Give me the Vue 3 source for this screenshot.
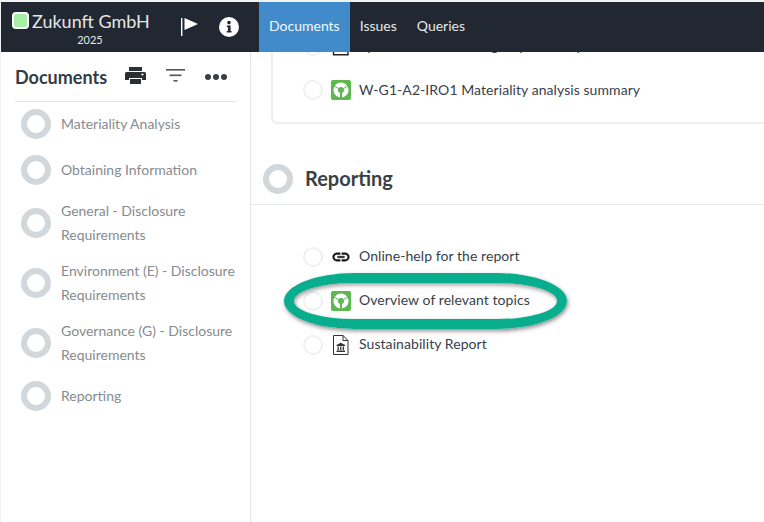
<template>
  <div class="page">
    <header class="topbar">
      <div class="brand">
        <div class="company">
          <span class="swatch"></span>
          <span class="company-name">Zukunft GmbH</span>
        </div>
        <div class="year">2025</div>
      </div>
      <svg class="flag" width="20" height="20" viewBox="0 0 20 20">
        <rect x="1" y="1" width="1.4" height="18" fill="#fff" />
        <path d="M4.5 1 L18 7 L4.5 13 Z" fill="#fff" />
      </svg>
      <svg class="info" width="20" height="20" viewBox="0 0 20 20">
        <circle cx="10" cy="10" r="10" fill="#fff" />
        <circle cx="10" cy="5.6" r="1.8" fill="#212831" />
        <path d="M7.8 8.4 H11.6 V14 H12.6 V15.6 H7.8 V14 H8.9 V10 H7.8 Z" fill="#212831" />
      </svg>
      <nav class="tabs">
        <a v-for="tab in tabs" :key="tab" class="tab" :class="{ active: tab === 'Documents' }">{{ tab }}</a>
      </nav>
    </header>

    <div class="body">
      <aside class="sidebar">
        <div class="side-head">
          <h2>Documents</h2>
          <svg class="print" width="21" height="17" viewBox="0 0 21 17">
            <path d="M4 0 H17 V4 H4 Z M1.5 5 H19.5 Q21 5 21 6.5 V13 H17 V11 H4 V13 H0 V6.5 Q0 5 1.5 5 Z M5 12 H16 V17 H5 Z" fill="#2b2f33" />
            <circle cx="17.5" cy="7.5" r="1.1" fill="#fff" />
          </svg>
          <svg class="filter" width="19" height="13" viewBox="0 0 19 13">
            <rect x="0" y="0" width="19" height="1.6" fill="#555" />
            <rect x="3.5" y="5.5" width="12" height="1.6" fill="#555" />
            <rect x="7.5" y="11" width="4" height="1.6" fill="#555" />
          </svg>
          <svg class="dots" width="22" height="6" viewBox="0 0 22 6">
            <circle cx="3" cy="3" r="3" fill="#3c4043" />
            <circle cx="11" cy="3" r="3" fill="#3c4043" />
            <circle cx="19" cy="3" r="3" fill="#3c4043" />
          </svg>
        </div>
        <ul class="side-list">
          <li v-for="item in sections" :key="item" class="side-item">
            <span class="ring"></span>
            <span class="side-label">{{ item }}</span>
          </li>
        </ul>
      </aside>

      <main class="content">
        <div class="card">
          <div class="row">
            <span class="radio"></span>
            <svg class="icon" width="20" height="20" viewBox="0 0 20 20">
              <path d="M2.5 0.5 H12 L17 5.5 V18.8 H2.5 Z" fill="#fff" stroke="#222" stroke-width="1.4" />
            </svg>
            <span class="doc-label">Synthesis of relevant groups and topics</span>
          </div>
          <div class="row">
            <span class="radio"></span>
            <svg class="icon" width="20" height="20" viewBox="0 0 20 20">
              <rect width="20" height="20" rx="2" fill="#5cb84f" />
              <circle cx="10" cy="10" r="5.3" fill="none" stroke="#fff" stroke-width="4.6" />
              <path d="M10 12 L10 18.5" stroke="#5cb84f" stroke-width="2" />
              <path d="M7.5 8.5 L2.6 5.7 M12.5 8.5 L17.4 5.7" stroke="#5cb84f" stroke-width="1" />
            </svg>
            <span class="doc-label">W-G1-A2-IRO1 Materiality analysis summary</span>
          </div>
        </div>

        <div class="section-head">
          <span class="ring big"></span>
          <h3>Reporting</h3>
        </div>

        <div class="doc-list">
          <div class="row">
            <span class="radio"></span>
            <svg class="icon" width="20" height="20" viewBox="0 0 24 24">
              <path d="M3.9 12c0-1.71 1.39-3.1 3.1-3.1h4V7H7c-2.76 0-5 2.24-5 5s2.24 5 5 5h4v-1.9H7c-1.71 0-3.1-1.39-3.1-3.1zM8 13h8v-2H8v2zm9-6h-4v1.9h4c1.71 0 3.1 1.39 3.1 3.1s-1.39 3.1-3.1 3.1h-4V17h4c2.76 0 5-2.24 5-5s-2.24-5-5-5z" fill="#111" stroke="#111" stroke-width="0.5" />
            </svg>
            <span class="doc-label">Online-help for the report</span>
          </div>
          <div class="row highlighted">
            <span class="radio"></span>
            <svg class="icon" width="20" height="20" viewBox="0 0 20 20">
              <rect width="20" height="20" rx="2" fill="#5cb84f" />
              <circle cx="10" cy="10" r="5.3" fill="none" stroke="#fff" stroke-width="4.6" />
              <path d="M10 12 L10 18.5" stroke="#5cb84f" stroke-width="2" />
              <path d="M7.5 8.5 L2.6 5.7 M12.5 8.5 L17.4 5.7" stroke="#5cb84f" stroke-width="1" />
            </svg>
            <span class="doc-label">Overview of relevant topics</span>
            <span class="oval"></span>
          </div>
          <div class="row">
            <span class="radio"></span>
            <svg class="icon" width="20" height="20" viewBox="0 0 20 20">
              <path d="M2.5 0.5 H12 L17 5.5 V19.5 H2.5 Z M12 0.5 V5.5 H17" fill="#fff" stroke="#333" stroke-width="1" />
              <path d="M5.5 10 L9.8 7.8 L14 10 V11 H5.5 Z M5.5 15.5 H14 V17 H5.5 Z M6.5 11.5 H7.8 V15 H6.5 Z M9.1 11.5 H10.4 V15 H9.1 Z M11.7 11.5 H13 V15 H11.7 Z" fill="#333" />
            </svg>
            <span class="doc-label">Sustainability Report</span>
          </div>
        </div>
      </main>
    </div>
  </div>
</template>

<script setup>
const tabs = ['Documents', 'Issues', 'Queries'];

const sections = [
  'Materiality Analysis',
  'Obtaining Information',
  'General - Disclosure Requirements',
  'Environment (E) - Disclosure Requirements',
  'Governance (G) - Disclosure Requirements',
  'Reporting'
];
</script>

<style scoped>
.page {
  width: 764px;
  height: 522px;
  box-sizing: border-box;
  padding-top: 2px;
  background: #f1f2f3;
  font-family: Lato, 'Liberation Sans', sans-serif;
  overflow: hidden;
  display: flex;
  flex-direction: column;
}

.topbar {
  height: 50px;
  flex: none;
  margin-left: 1px;
  background: #212831;
  display: flex;
  align-items: center;
  position: relative;
  z-index: 2;
}

.brand {
  width: 170px;
  flex: none;
  padding-left: 11px;
  box-sizing: border-box;
  color: #e4e6e8;
}

.company {
  display: flex;
  align-items: center;
  gap: 3px;
  height: 22px;
  margin-top: 1px;
}

.swatch {
  width: 13px;
  height: 13px;
  background: #a8eea4;
  border: 2px solid #fff;
  border-radius: 4px;
}

.company-name {
  font-size: 18px;
}

.year {
  font-size: 11px;
  text-align: center;
  width: 156px;
  margin-top: 1px;
}

.flag {
  margin-left: 9px;
}

.info {
  margin-left: 19px;
}

.tabs {
  display: flex;
  margin-left: 20px;
  height: 100%;
}

.tab {
  color: #e6e8ea;
  font-size: 14px;
  line-height: 48px;
  padding: 0 10px;
}

.tab.active {
  background: #428bca;
  color: #f4f7fa;
}

.body {
  flex: 1;
  min-height: 0;
  display: flex;
  background: #fff;
  margin-left: 1px;
}

.sidebar {
  width: 250px;
  flex: none;
  box-sizing: border-box;
  border-right: 1px solid #e2e4e6;
  padding: 0 14px;
}

.side-head {
  height: 49px;
  border-bottom: 1px solid #e2e4e6;
  display: flex;
  align-items: center;
}

.side-head h2 {
  margin: 0;
  font-size: 18px;
  font-weight: 700;
  color: #333c46;
  width: 110px;
  flex: none;
}

.print {
  margin-top: -2px;
}

.filter {
  margin-left: 20px;
  margin-top: -2px;
}

.dots {
  margin-left: 20px;
}

.side-list {
  list-style: none;
  margin: 5px 0 0;
  padding: 0 0 0 6px;
}

.side-item {
  display: flex;
  align-items: center;
  gap: 10px;
  min-height: 34px;
  margin-bottom: 12px;
}

.ring {
  width: 30px;
  height: 30px;
  box-sizing: border-box;
  border: 6px solid #d2d7dc;
  border-radius: 50%;
  flex: none;
}

.side-label {
  font-size: 14px;
  line-height: 24px;
  color: #868b90;
}

.content {
  flex: 1;
  min-width: 0;
  overflow: hidden;
}

.card {
  margin: -19px 0 0 20px;
  padding: 0 0 21px 30px;
  height: 91px;
  border: 2px solid #eceeef;
  border-top: none;
  border-right: none;
  border-radius: 0 0 0 6px;
  display: flex;
  flex-direction: column;
  justify-content: flex-end;
  gap: 22px;
  box-sizing: border-box;
  width: 600px;
}

.card .doc-label {
  margin-bottom: 2px;
}

.row {
  display: flex;
  align-items: center;
  height: 22px;
  position: relative;
}

.radio {
  width: 20px;
  height: 20px;
  box-sizing: border-box;
  border: 2px solid #eef0f1;
  border-radius: 50%;
  margin-right: 8px;
  flex: none;
}

.icon {
  flex: none;
  margin-right: 8px;
}

.doc-label {
  font-size: 14px;
  letter-spacing: 0.07px;
  color: #38414b;
  white-space: nowrap;
}

.section-head {
  height: 60px;
  margin-top: 21px;
  padding-left: 12px;
  border-bottom: 1px solid #e6e8ea;
  display: flex;
  align-items: flex-start;
  gap: 12px;
  box-sizing: border-box;
}

.ring.big {
  margin-top: 19px;
}

.section-head h3 {
  margin: 19px 0 0;
  font-size: 20px;
  font-weight: 700;
  line-height: 28px;
  color: #3a3f44;
}

.doc-list {
  padding: 41px 0 0 52px;
  display: flex;
  flex-direction: column;
  gap: 22px;
}

.doc-list .doc-label {
  margin-bottom: 4px;
}

.oval {
  position: absolute;
  left: -19px;
  top: -17px;
  width: 283px;
  height: 56px;
  box-sizing: border-box;
  border: 10px solid #07ad8d;
  border-radius: 70px / 28px;
  box-shadow: 1px 2px 4px rgba(0, 0, 0, 0.45), inset 1px 2px 4px rgba(0, 0, 0, 0.4);
}
</style>
